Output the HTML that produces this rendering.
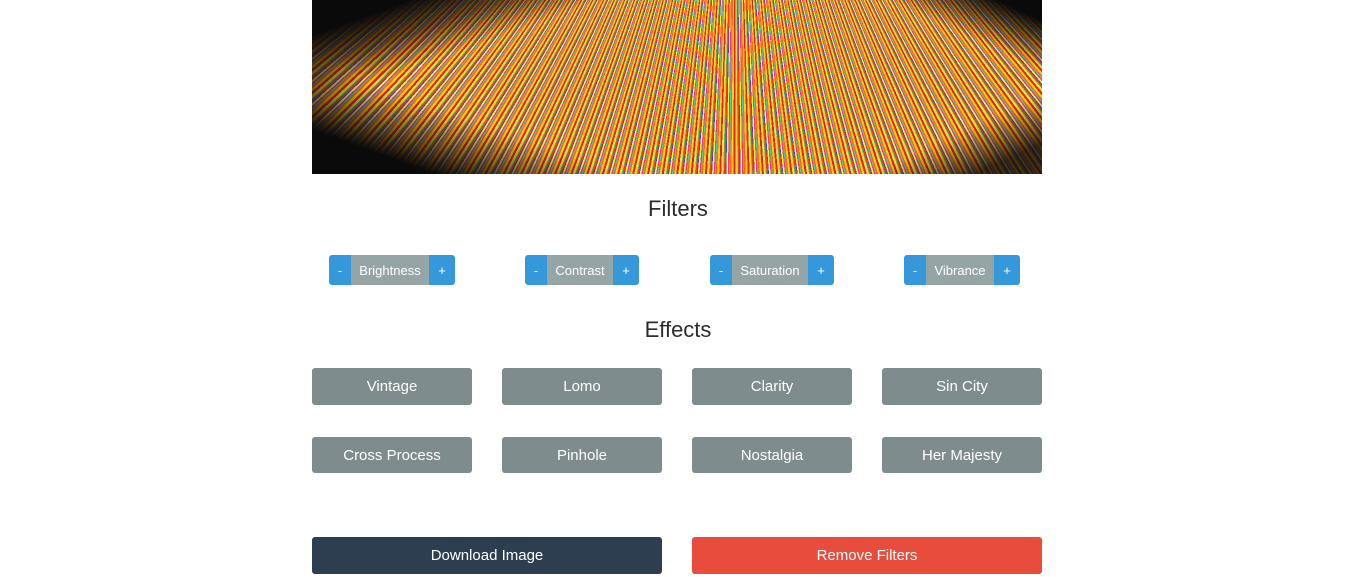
<!DOCTYPE html><html><head><style>
body{margin:0;background:#fff;font-family:"Liberation Sans",sans-serif;width:1356px;height:577px;overflow:hidden;position:relative}
.img{position:absolute;left:312px;top:0;width:730px;height:174px;background:#0a0a0a;overflow:hidden}
.img .a{position:absolute;inset:0;background:repeating-conic-gradient(from 90deg at 58% -160%,#e52020 0deg .25deg,#ffd400 .25deg .5deg,#ff6a00 .5deg .68deg,#2fd0e0 .68deg .8deg,#ff2d8a .8deg .95deg,#f4ff20 .95deg 1.15deg,#3040ff 1.15deg 1.25deg,#ff3a10 1.25deg 1.45deg,#30e040 1.45deg 1.55deg,#ffe040 1.55deg 1.8deg)}
.img .b{position:absolute;inset:0;background:
linear-gradient(160deg,#0a0a0a 8%,rgba(10,10,10,.6) 16%,transparent 24%),
linear-gradient(20deg,#0a0a0a 10%,rgba(10,10,10,.5) 18%,transparent 26%),
linear-gradient(-155deg,#0a0a0a 4%,transparent 14%),
linear-gradient(-25deg,rgba(10,10,10,.8) 6%,transparent 16%)}
h2{position:absolute;margin:0;width:100%;text-align:center;font-weight:normal;font-size:22px;color:#2c2c2c}
.g{position:absolute;top:255px;height:30px;display:flex;font-size:13px;color:#fff;border-radius:3px;overflow:hidden}
.g span{display:flex;align-items:center;justify-content:center}
.g .p{background:#3498db;width:22px}.g .l{background:#95a5a6;padding:0 8px}
.e{position:absolute;width:160px;height:37px;background:#7f8c8d;color:#fff;border-radius:3px;font-size:15px;display:flex;align-items:center;justify-content:center}
</style></head><body>
<div class="img"><div class="a"></div><div class="b"></div></div>
<h2 style="top:196px">Filters</h2>
<div class="g" style="left:329px"><span class="p">-</span><span class="l" style="width:62px">Brightness</span><span class="p" style="width:26px">+</span></div>
<div class="g" style="left:525px"><span class="p">-</span><span class="l" style="width:50px">Contrast</span><span class="p" style="width:26px">+</span></div>
<div class="g" style="left:710px"><span class="p">-</span><span class="l" style="width:60px">Saturation</span><span class="p" style="width:26px">+</span></div>
<div class="g" style="left:904px"><span class="p">-</span><span class="l" style="width:52px">Vibrance</span><span class="p" style="width:26px">+</span></div>
<h2 style="top:317px">Effects</h2>
<div class="e" style="left:312px;top:368px">Vintage</div>
<div class="e" style="left:502px;top:368px">Lomo</div>
<div class="e" style="left:692px;top:368px">Clarity</div>
<div class="e" style="left:882px;top:368px">Sin City</div>
<div class="e" style="left:312px;top:437px;height:36px">Cross Process</div>
<div class="e" style="left:502px;top:437px;height:36px">Pinhole</div>
<div class="e" style="left:692px;top:437px;height:36px">Nostalgia</div>
<div class="e" style="left:882px;top:437px;height:36px">Her Majesty</div>
<div class="e" style="left:312px;top:537px;width:350px;background:#2c3e50">Download Image</div>
<div class="e" style="left:692px;top:537px;width:350px;background:#e74c3c">Remove Filters</div>
</body></html>
